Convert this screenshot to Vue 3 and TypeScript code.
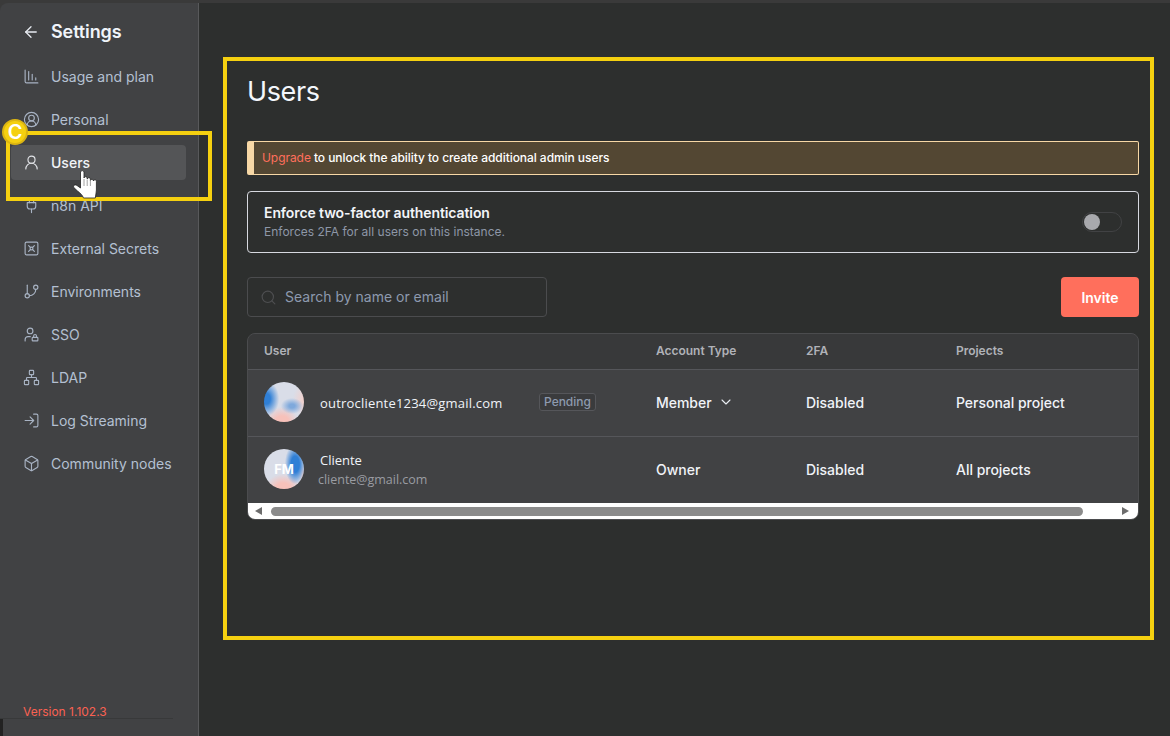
<script setup lang="ts">
interface NavItem {
  label: string
  icon: string
  active?: boolean
}

const navItems: NavItem[] = [
  { label: 'Usage and plan', icon: '<path d="M13 17V9"/><path d="M18 17v-3"/><path d="M3 3v16a2 2 0 0 0 2 2h16"/><path d="M8 17V5"/>' },
  { label: 'Personal', icon: '<path d="M18 20a6 6 0 0 0-12 0"/><circle cx="12" cy="10" r="4"/><circle cx="12" cy="12" r="10"/>' },
  { label: 'Users', active: true, icon: '<circle cx="12" cy="8" r="5"/><path d="M20 21a8 8 0 0 0-16 0"/>' },
  { label: 'n8n API', icon: '<path d="M12 22v-5"/><path d="M9 8V2"/><path d="M15 8V2"/><path d="M18 8v5a4 4 0 0 1-4 4h-4a4 4 0 0 1-4-4V8Z"/>' },
  { label: 'External Secrets', icon: '<rect x="3" y="3" width="18" height="18" rx="2"/><path d="m7.9 7.9 2.7 2.7"/><path d="m13.4 10.6 2.7-2.7"/><path d="m7.9 16.1 2.7-2.7"/><path d="m13.4 13.4 2.7 2.7"/><circle cx="12" cy="12" r="2"/>' },
  { label: 'Environments', icon: '<line x1="6" x2="6" y1="3" y2="15"/><circle cx="18" cy="6" r="3"/><circle cx="6" cy="18" r="3"/><path d="M18 9a9 9 0 0 1-9 9"/>' },
  { label: 'SSO', icon: '<circle cx="10" cy="7" r="4"/><path d="M10.3 15H7a4 4 0 0 0-4 4v2"/><path d="M15 15.5V14a2 2 0 0 1 4 0v1.5"/><rect x="13" y="16" width="8" height="5" rx=".9"/>' },
  { label: 'LDAP', icon: '<rect x="16" y="16" width="6" height="6" rx="1"/><rect x="2" y="16" width="6" height="6" rx="1"/><rect x="9" y="2" width="6" height="6" rx="1"/><path d="M5 16v-3a1 1 0 0 1 1-1h12a1 1 0 0 1 1 1v3"/><path d="M12 12V8"/>' },
  { label: 'Log Streaming', icon: '<path d="M15 3h4a2 2 0 0 1 2 2v14a2 2 0 0 1-2 2h-4"/><path d="m10 17 5-5-5-5"/><path d="M15 12H3"/>' },
  { label: 'Community nodes', icon: '<path d="M21 8a2 2 0 0 0-1-1.73l-7-4a2 2 0 0 0-2 0l-7 4A2 2 0 0 0 3 8v8a2 2 0 0 0 1 1.73l7 4a2 2 0 0 0 2 0l7-4A2 2 0 0 0 21 16Z"/><path d="m3.3 7 8.7 5 8.7-5"/><path d="M12 22V12"/>' },
]
</script>

<template>
  <div class="page">
    <aside class="sidebar">
      <div class="side-head">
        <svg class="back" viewBox="0 0 24 24"><path d="m12 19-7-7 7-7"/><path d="M19 12H5"/></svg>
        <span>Settings</span>
      </div>
      <nav class="nav">
        <a v-for="item in navItems" :key="item.label" :class="['nav-item', { active: item.active }]">
          <svg class="nav-icon" viewBox="0 0 24 24" v-html="item.icon"></svg>
          <span>{{ item.label }}</span>
        </a>
      </nav>
      <div class="version">Version 1.102.3</div>
    </aside>

    <main class="main">
      <h1 class="title">Users</h1>

      <div class="alert"><span class="upgrade">Upgrade</span> to unlock the ability to create additional admin users</div>

      <div class="tfa-card">
        <div>
          <div class="tfa-title">Enforce two-factor authentication</div>
          <div class="tfa-sub">Enforces 2FA for all users on this instance.</div>
        </div>
        <div class="switch"><span class="knob"></span></div>
      </div>

      <div class="toolbar">
        <div class="search">
          <svg class="search-icon" viewBox="0 0 24 24"><circle cx="11" cy="11" r="8"/><path d="m21 21-4.3-4.3"/></svg>
          <span>Search by name or email</span>
        </div>
        <button class="invite">Invite</button>
      </div>

      <div class="table">
        <div class="row head">
          <div class="cell">User</div>
          <div class="cell">Account Type</div>
          <div class="cell">2FA</div>
          <div class="cell">Projects</div>
        </div>
        <div class="row">
          <div class="cell user">
            <div class="avatar a1"></div>
            <span class="email-main">outrocliente1234@gmail.com</span>
            <span class="badge">Pending</span>
          </div>
          <div class="cell role">
            Member
            <svg class="chev" viewBox="0 0 24 24"><path d="m6 9 6 6 6-6"/></svg>
          </div>
          <div class="cell">Disabled</div>
          <div class="cell">Personal project</div>
        </div>
        <div class="row">
          <div class="cell user">
            <div class="avatar a2">FM</div>
            <div class="who">
              <div class="name">Cliente</div>
              <div class="mail">cliente@gmail.com</div>
            </div>
          </div>
          <div class="cell">Owner</div>
          <div class="cell">Disabled</div>
          <div class="cell">All projects</div>
        </div>
        <div class="scrollbar">
          <span class="arrow left"></span>
          <span class="thumb"></span>
          <span class="arrow right"></span>
        </div>
      </div>
    </main>

    <!-- tutorial annotations drawn over the screenshot -->
    <div class="frame frame-main"></div>
    <div class="frame frame-nav"></div>
    <div class="callout">C</div>
    <svg class="hand" viewBox="0 0 24 29">
      <path d="M7.500 2A1.800 1.800 0 0 1 11 2V8A1.600 1.600 0 0 1 14.200 8.500V9A1.600 1.600 0 0 1 17.400 9.500V10.500A1.500 1.500 0 0 1 20.400 11A1.500 1.500 0 0 1 23.400 11.500V20C23.400 23 22.500 25 22.300 28H10.500C9.500 25 7 23 4.500 21L.8 17.500C-.2 15.500 2 14 4 15.500L7.500 18Z" />
      <path class="finger" d="M11 9v7M14.200 9.500v6.500M17.400 10.500v5.500" />
    </svg>
  </div>
</template>

<style>
html,
body {
  margin: 0;
  background: #2d2f2e;
}
</style>

<style scoped>
* {
  box-sizing: border-box;
}

.page {
  position: relative;
  display: flex;
  width: 1170px;
  height: 736px;
  overflow: hidden;
  padding-top: 3px;
  background: #3a3a3a;
  font-family: Inter, "Liberation Sans", sans-serif;
  color: #f2f4f8;
}

.sidebar {
  position: relative;
  display: flex;
  flex-direction: column;
  flex: 0 0 199px;
  border-right: 1px solid #58595b;
  border-top-left-radius: 8px;
  background: #414244;
}

/* sliver of the window behind, bottom left corner */
.sidebar::after {
  content: "";
  position: absolute;
  left: 0;
  bottom: 0;
  width: 3px;
  height: 17px;
  background: #222;
}

.side-head {
  display: flex;
  align-items: center;
  gap: 11px;
  padding: 4px 0 0 22px;
  height: 53px;
  font-size: 18px;
  font-weight: 600;
  letter-spacing: -0.1px;
  color: #f0f4fa;
}

.back {
  width: 18px;
  height: 18px;
  fill: none;
  stroke: #e8ecf2;
  stroke-width: 1.7;
  stroke-linecap: round;
  stroke-linejoin: round;
}

.nav {
  display: flex;
  flex-direction: column;
  gap: 8px;
  padding: 3px 12px 0 11px;
}

.nav-item {
  display: flex;
  align-items: center;
  gap: 11px;
  height: 35px;
  padding-left: 12px;
  border-radius: 4px;
  font-size: 14px;
  font-weight: 400;
  color: #b4c0d2;
}

.nav-item.active {
  background: #545557;
  color: #f2f4f8;
  font-weight: 500;
}

.nav-icon {
  flex: none;
  width: 17px;
  height: 17px;
  fill: none;
  stroke: currentColor;
  stroke-width: 1.6;
  stroke-linecap: round;
  stroke-linejoin: round;
  opacity: 0.9;
}

.version {
  margin-top: auto;
  margin-bottom: 17px;
  width: 173px;
  height: 16px;
  padding-left: 23px;
  border-bottom: 1px solid #38393a;
  font-size: 12px;
  line-height: 18px;
  color: #fa6152;
}

.main {
  flex: 1;
  padding: 69px 31px 0 48px;
  background: #2d2f2e;
}

.title {
  margin: 0;
  height: 69px;
  font-size: 27px;
  line-height: 40px;
  font-weight: 400;
  letter-spacing: -0.4px;
  color: #f4f7fc;
}

.alert {
  height: 34px;
  padding-left: 8px;
  border: 1px solid #f7d8a6;
  border-left-width: 7px;
  border-radius: 2px;
  background: #534733;
  font-size: 12px;
  font-weight: 500;
  line-height: 32px;
  letter-spacing: -0.06px;
  color: #fff;
}

.upgrade {
  color: #ff6f5c;
  font-weight: 400;
}

.tfa-card {
  display: flex;
  align-items: center;
  justify-content: space-between;
  height: 62px;
  margin-top: 16px;
  padding: 0 16px;
  border: 1px solid #d7d9e0;
  border-radius: 4px;
}

.tfa-title {
  margin-top: -1px;
  font-size: 14px;
  font-weight: 600;
  line-height: 19px;
  letter-spacing: -0.1px;
  color: #f2f4f8;
}

.tfa-sub {
  margin-top: 1px;
  font-size: 12px;
  line-height: 17px;
  color: #8d97a7;
}

.switch {
  display: flex;
  align-items: center;
  width: 40px;
  height: 20px;
  padding: 1px;
  border: 1px solid #414244;
  border-radius: 10px;
}

.knob {
  width: 16px;
  height: 16px;
  border-radius: 50%;
  background: #a8a9ad;
}

.toolbar {
  display: flex;
  align-items: center;
  justify-content: space-between;
  margin-top: 24px;
}

.search {
  display: flex;
  align-items: center;
  gap: 8px;
  width: 300px;
  height: 40px;
  padding: 0 0 2px 12px;
  border: 1px solid #4b4c4e;
  border-radius: 4px;
  font-size: 14px;
  color: #8d9aae;
}

.search-icon {
  width: 17px;
  height: 17px;
  margin-top: 2px;
  fill: none;
  stroke: #4e4f51;
  stroke-width: 1.6;
  stroke-linecap: round;
}

.invite {
  width: 78px;
  height: 40px;
  border: 0;
  border-radius: 4px;
  background: #ff6f5c;
  color: #fff;
  font: 600 14px Inter, "Liberation Sans", sans-serif;
}

.table {
  margin-top: 16px;
  border: 1px solid #4b4c4e;
  border-radius: 8px;
  overflow: hidden;
  background: #414244;
}

.row {
  display: grid;
  grid-template-columns: 392px 150px 150px 1fr;
  align-items: center;
  height: 67px;
  padding-bottom: 2px;
  border-bottom: 1px solid #55565a;
  font-size: 14px;
  font-weight: 500;
  letter-spacing: -0.02px;
  color: #f0f3f8;
}

.row:nth-child(3) {
  height: 66px;
  border-bottom: 0;
}

.row.head {
  height: 36px;
  background: #38393a;
  font-size: 12px;
  font-weight: 600;
  color: #b0b2b8;
}

.cell {
  padding-left: 16px;
}

.user {
  display: flex;
  align-items: center;
}

.avatar {
  flex: none;
  display: flex;
  align-items: center;
  justify-content: center;
  width: 40px;
  height: 40px;
  border-radius: 50%;
  font-size: 13px;
  font-weight: 700;
  color: #fff;
}

.a1 {
  background:
    radial-gradient(ellipse 32% 44% at 6% 42%, #2f7fd6 0, #2f7fd6 30%, #2f7fd600 100%),
    radial-gradient(ellipse 28% 20% at 70% 60%, #7fa9dc 0, #7fa9dc 25%, #7fa9dc00 100%),
    radial-gradient(ellipse 42% 38% at 45% 100%, #f7c1ba 0, #f7c1ba 40%, #f7c1ba00 100%),
    radial-gradient(ellipse 28% 42% at 100% 45%, #f3cfca 0, #f3cfca00 100%),
    #d9dde8;
}

.a2 {
  background:
    radial-gradient(ellipse 26% 50% at 78% 38%, #2f7fd6 0, #2f7fd6 40%, #2f7fd600 100%),
    radial-gradient(ellipse 45% 38% at 48% 100%, #f7c1ba 0, #f7c1ba 40%, #f7c1ba00 100%),
    radial-gradient(ellipse 14% 30% at 100% 66%, #f3cfca 0, #f3cfca00 100%),
    #d9dde8;
}

.email-main {
  margin-left: 16px;
  margin-top: 2px;
  font-family: "Open Sans", sans-serif;
  font-size: 13px;
  font-weight: 400;
  letter-spacing: 0.2px;
}

.badge {
  margin-left: 36px;
  height: 18px;
  padding: 0 4.5px;
  border: 1px solid #55565a;
  border-radius: 3px;
  background: #3a3b3d;
  font-size: 12px;
  font-weight: 500;
  line-height: 15px;
  color: #8d9aae;
}

.who {
  margin-left: 16px;
  font-family: "Open Sans", sans-serif;
  font-weight: 400;
}

.name {
  font-size: 13px;
  line-height: 22px;
}

.mail {
  margin-left: -2px;
  font-size: 12.5px;
  line-height: 18px;
  color: #9a9ca2;
}

.role {
  display: flex;
  align-items: center;
  gap: 6px;
}

.chev {
  width: 16px;
  height: 16px;
  fill: none;
  stroke: #e8ecf2;
  stroke-width: 1.6;
  stroke-linecap: round;
  stroke-linejoin: round;
}

.scrollbar {
  display: flex;
  align-items: center;
  height: 16px;
  padding: 0 9px 0 7px;
  background: #fff;
}

.thumb {
  width: 812px;
  height: 9px;
  margin-left: 9px;
  border-radius: 5px;
  background: #8b8b8b;
}

.arrow {
  width: 0;
  height: 0;
  border-top: 4px solid transparent;
  border-bottom: 4px solid transparent;
}

.arrow.left {
  border-right: 7px solid #6d6d6d;
}

.arrow.right {
  margin-left: auto;
  border-left: 7px solid #6d6d6d;
}

.frame {
  position: absolute;
  border: 4px solid #f5d010;
  pointer-events: none;
}

.frame-main {
  left: 223px;
  top: 57px;
  width: 931px;
  height: 583px;
}

.frame-nav {
  left: 6px;
  top: 131px;
  width: 206px;
  height: 70px;
}

.callout {
  position: absolute;
  left: 2px;
  top: 119px;
  width: 26px;
  height: 26px;
  border: 2px solid #dcb512;
  border-radius: 50%;
  background: #f5d010;
  color: #fff;
  font-size: 20px;
  font-weight: 600;
  line-height: 22px;
  text-align: center;
}

.hand {
  position: absolute;
  left: 73px;
  top: 170px;
  width: 24px;
  height: 29px;
  overflow: visible;
  fill: #fff;
  stroke: #222;
  stroke-width: 0.8;
  stroke-linejoin: round;
}

.finger {
  fill: none;
  stroke: #8a8a8a;
  stroke-width: 0.8;
}
</style>
